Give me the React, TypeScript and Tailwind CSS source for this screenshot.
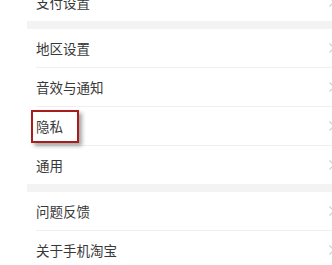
import React from 'react';

type Row = { label: string; highlight?: boolean };

const groups: Row[][] = [
  [{ label: '支付设置' }],
  [{ label: '地区设置' }, { label: '音效与通知' }, { label: '隐私', highlight: true }, { label: '通用' }],
  [{ label: '问题反馈' }, { label: '关于手机淘宝' }],
];

const Chevron = () => (
  <svg width="8" height="12" viewBox="0 0 8 12" className="shrink-0 -mr-[4px]">
    <path d="M1.5 1.5 L6 6 L1.5 10.5" fill="none" stroke="#cdcdcd" strokeWidth="1.2" />
  </svg>
);

const SettingRow = ({ row, last }: { row: Row; last: boolean }) => (
  <div className="relative pl-[9px]">
    <div
      className={`h-[38px] flex items-center justify-between ${last ? '' : 'h-[39px] border-b border-[#efefef]'}`}
    >
      <span className="text-[13.5px] text-[#383838]">{row.label}</span>
      <Chevron />
    </div>
    {row.highlight && (
      <div className="absolute left-[4px] top-[3px] w-[48px] h-[33px] border-2 border-[#a51d1d] shadow-[3px_3px_4px_rgba(0,0,0,0.35)]" />
    )}
  </div>
);

export default function App() {
  return (
    <div
      className="w-[332px] h-[265px] overflow-hidden bg-white"
      style={{ fontFamily: '"Noto Sans CJK SC", "Noto Sans", sans-serif' }}
    >
      <div className="ml-[27px] -mt-[17px] flex flex-col">
        {groups.map((g, gi) => (
          <div key={gi} className="flex flex-col">
            {gi > 0 && <div className="h-[8px] bg-[#f3f3f3]" />}
            {g.map((r, ri) => (
              <SettingRow key={r.label} row={r} last={ri === g.length - 1} />
            ))}
          </div>
        ))}
      </div>
    </div>
  );
}
